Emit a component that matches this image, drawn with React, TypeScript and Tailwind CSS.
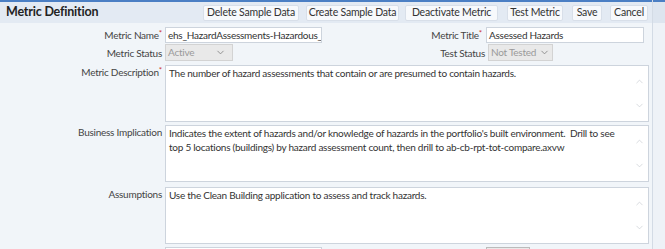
import { ChevronDown, ChevronUp } from "lucide-react";

const font = { fontFamily: "Lato, 'Liberation Sans', sans-serif" };

function Btn({ children, w, ml }: { children: string; w: string; ml: string }) {
  return (
    <button
      className={`${w} ${ml} h-[16px] shrink-0 whitespace-nowrap rounded-[2px] border border-[#d8dfe9] bg-[#f7f9fc] text-[10.5px] leading-none tracking-[-0.2px] text-[#333]`}
    >
      {children}
    </button>
  );
}

function Label({ text, req, w }: { text: string; req?: boolean; w: string }) {
  return (
    <div className={`${w} shrink-0 whitespace-nowrap text-right text-[10px] leading-[14px] tracking-[-0.25px] text-[#444]`}>
      {text}
      {req && <span className="align-top text-[8px] leading-[10px] text-[#c33]">*</span>}
    </div>
  );
}

function Area({ text }: { text: string }) {
  return (
    <div className="flex h-[57px] w-[484px] overflow-hidden border border-[#cdd4dd] bg-white">
      <div className="flex-1 whitespace-pre-wrap px-[3px] text-[10px] leading-[14px] tracking-[-0.25px] text-[#333]">
        {text}
      </div>
      <div className="flex w-[17px] flex-col items-center justify-between py-[10px] text-[#c8ccd2]">
        <ChevronUp size={11} strokeWidth={1.5} />
        <ChevronDown size={11} strokeWidth={1.5} />
      </div>
    </div>
  );
}

export default function App() {
  return (
    <div className="h-[249px] w-[665px] overflow-hidden bg-[#f1f5f9]" style={font}>
      <div className="flex h-full">
        <div className="w-[652px] shrink-0">
          <div className="h-[2px] bg-[#4b7fc4]" />
          <div className="flex h-[21px] items-center bg-[#e3eaf3] pl-[6px]">
            <div className="w-[197px] shrink-0 text-[12.5px] font-bold tracking-[-0.2px] text-[#222]">Metric Definition</div>
            <Btn w="w-[96px]" ml="ml-0">Delete Sample Data</Btn>
            <Btn w="w-[93px]" ml="ml-[7px]">Create Sample Data</Btn>
            <Btn w="w-[93px]" ml="ml-[6px]">Deactivate Metric</Btn>
            <Btn w="w-[56px]" ml="ml-[9px]">Test Metric</Btn>
            <Btn w="w-[30px]" ml="ml-[9px]">Save</Btn>
            <Btn w="w-[38px]" ml="ml-[8px]">Cancel</Btn>
          </div>
          <div className="flex flex-col">
            <div className="mt-[4px] flex h-[16px] items-center">
              <Label text="Metric Name" req w="w-[162px]" />
              <div className="ml-[3px] h-[16px] w-[157px] overflow-hidden whitespace-nowrap border border-[#cdd4dd] bg-white px-[2px] text-[10px] leading-[14px] tracking-[-0.25px] text-[#333]">
                ehs_HazardAssessments-Hazardous_assessments
              </div>
              <Label text="Metric Title" req w="w-[160px]" />
              <div className="ml-[4px] h-[16px] w-[158px] border border-[#cdd4dd] bg-white px-[2px] text-[10px] leading-[14px] tracking-[-0.25px] text-[#333]">
                Assessed Hazards
              </div>
            </div>
            <div className="mt-[1px] flex h-[17px] items-center">
              <Label text="Metric Status" w="w-[162px]" />
              <div className="ml-[3px] flex h-[17px] w-[68px] items-center justify-between border border-[#d3d3d3] bg-[#e9e9e9] pl-[2px] pr-[6px] text-[10px] tracking-[-0.25px] text-[#9a9a9a]">
                Active
                <ChevronDown size={11} strokeWidth={2} className="text-[#8a8a8a]" />
              </div>
              <Label text="Test Status" w="w-[252px]" />
              <div className="ml-[3px] flex h-[17px] w-[65px] items-center justify-between whitespace-nowrap border border-[#d3d3d3] bg-[#e9e9e9] pl-[2px] pr-[2px] text-[10px] tracking-[-0.25px] text-[#9a9a9a]">
                Not Tested
                <ChevronDown size={11} strokeWidth={2} className="text-[#8a8a8a]" />
              </div>
            </div>
            <div className="mt-[4px] flex gap-[3px]">
              <Label text="Metric Description" req w="w-[162px]" />
              <Area text="The number of hazard assessments that contain or are presumed to contain hazards." />
            </div>
            <div className="mt-[3px] flex gap-[3px]">
              <Label text="Business Implication" w="w-[162px]" />
              <Area
                text={
                  "Indicates the extent of hazards and/or knowledge of hazards in the portfolio's built environment.  Drill to see\ntop 5 locations (buildings) by hazard assessment count, then drill to ab-cb-rpt-tot-compare.axvw"
                }
              />
            </div>
            <div className="mt-[5px] flex gap-[3px]">
              <Label text="Assumptions" w="w-[162px]" />
              <Area text="Use the Clean Building application to assess and track hazards." />
            </div>
            <div className="mt-[3px] flex">
              <div className="ml-[165px] h-[17px] w-[157px] shrink-0 border border-[#cdd4dd] bg-white" />
              <div className="ml-[164px] h-[17px] w-[44px] shrink-0 border border-[#bbb] bg-[#e9e9e9]" />
            </div>
          </div>
        </div>
        <div className="flex-1 border-l border-[#d3dbe5] bg-[#eef2f7]">
          <div className="h-[2px] bg-[#4b7fc4]" />
          <div className="h-[21px] bg-[#dde5ef]" />
        </div>
      </div>
    </div>
  );
}
